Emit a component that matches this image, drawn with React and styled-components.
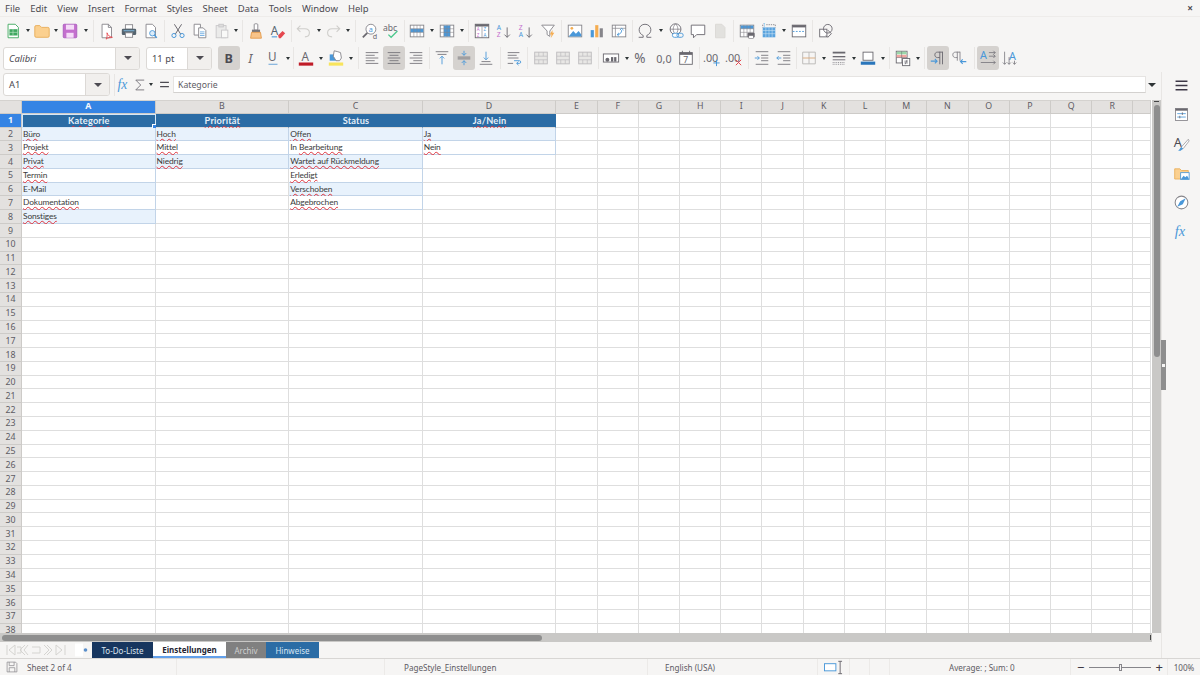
import React from "react";
import styled, { createGlobalStyle, css } from "styled-components";

const Global = createGlobalStyle`
  html, body { margin: 0; padding: 0; background: #f6f5f4; }
  body { font-family: "Noto Sans", sans-serif; color: #3d3846; overflow: hidden; }
`;

const G = "#6a686f";
const B = "#4a98d9";
const D = "#86858a";

const lines = (rows, color = G) =>
  rows.map(([x1, x2, y], i) => (
    <line key={i} x1={x1} x2={x2} y1={y} y2={y} stroke={color} strokeWidth=".9" />
  ));

const table = (fill, rect) => (
  <>
    <rect x="2.500" y="3.500" width="15" height="13" fill="#fff" stroke={D} />
    {rect && <rect {...rect} fill={fill} />}
    <path d="M2.500 7.500h15M2.500 11.500h15M6.500 3.500v13M10 3.500v13M13.500 3.500v13" stroke={D} strokeWidth=".6" fill="none" />
  </>
);

const merged = (
  <g opacity=".4">
    <rect x="3" y="3.500" width="14" height="13" fill="#d5d3d0" stroke={G} />
    <path d="M3 8h14M3 12h14M7.500 3.500V8M12.500 3.500V8M7.500 12v4.500M12.500 12v4.500" stroke={G} strokeWidth=".8" fill="none" />
  </g>
);

function Glyph({ children, $w, $i, $c, $s = 13, $x = 5, $y = 15, $serif }) {
  return (
    <text
      x={$x}
      y={$y}
      fontSize={$s}
      fontWeight={$w || 400}
      fontStyle={$i ? "italic" : "normal"}
      fontFamily={$serif ? "Liberation Serif, serif" : "Noto Sans, sans-serif"}
      fill={$c}
    >
      {children}
    </text>
  );
}

const icons = {
  new: (
    <>
      <path d="M4.500 2.500h8l3.500 3.500v11.500h-11.500z" fill="#fff" stroke="#3fa860" />
      <rect x="6" y="8" width="9" height="7" fill="#3fa860" />
      <path d="M6 11.500h9M10 8v7" stroke="#bfe6c9" strokeWidth=".7" />
    </>
  ),
  open: <path d="M2 5.500c0-1 .5-1.500 1.500-1.500h4l2 2h7c1 0 1.500.5 1.500 1.500v8c0 1-.5 1.500-1.500 1.500h-13c-1 0-1.500-.5-1.500-1.500z" fill="#fbd08f" stroke="#e8ad58" />,
  save: (
    <>
      <rect x="2.500" y="2.500" width="15" height="15" rx="1" fill="#c46fce" stroke="#a95cbd" />
      <rect x="5.500" y="3" width="9" height="5.500" fill="#f5dcf8" />
      <rect x="6" y="12" width="8" height="5.500" fill="#f5dcf8" />
    </>
  ),
  pdf: (
    <>
      <path d="M4.500 2.500h7l3.500 3.500v11.500h-10.500z" fill="#fff" stroke={D} />
      <path d="M11.500 2.500v3.500h3.500" fill="none" stroke={D} />
      <path d="M10 12c1 3 3 4.500 6 5-3 0-5 .5-7 2 1-2 1.500-4 1-7z" fill="none" stroke="#e5484f" />
    </>
  ),
  print: (
    <>
      <rect x="6" y="3" width="8" height="5" fill="#fff" stroke={D} />
      <rect x="2" y="7.500" width="16" height="7" rx="1.500" fill="#55646f" />
      <rect x="6" y="12" width="8" height="5" fill="#fff" stroke={D} />
      <rect x="4" y="9" width="12" height="1.300" fill="#77aacc" />
    </>
  ),
  preview: (
    <>
      <path d="M4.500 2.500h7l3.500 3.500v11.500h-10.500z" fill="#fff" stroke={D} />
      <circle cx="11.500" cy="12.500" r="3" fill="#dcecf9" stroke={B} />
      <path d="M13.500 14.500l3 3" stroke={B} strokeWidth="1.500" />
    </>
  ),
  cut: (
    <>
      <path d="M6 2.500l7 11M14 2.500l-7 11" stroke={G} strokeWidth="1.100" />
      <circle cx="5.500" cy="15" r="2.300" fill="none" stroke={B} strokeWidth="1.100" />
      <circle cx="14.500" cy="15" r="2.300" fill="none" stroke={B} strokeWidth="1.100" />
    </>
  ),
  copy: (
    <>
      <path d="M3.500 2.500h7v12h-7z" fill="#fff" stroke={D} />
      <path d="M8.500 6.500h5l3 3v8h-8z" fill="#fff" stroke={D} />
      <path d="M10 11h5M10 13h5M10 15h5" stroke={B} strokeWidth=".8" />
    </>
  ),
  paste: (
    <g opacity=".4">
      <rect x="3.500" y="4" width="11" height="13.500" fill="#ddd" stroke={D} />
      <rect x="6.500" y="2.500" width="5" height="3" fill="#bbb" stroke={D} />
      <rect x="9.500" y="9" width="7" height="8.500" fill="#fff" stroke={D} />
    </g>
  ),
  clone: (
    <>
      <rect x="8" y="2" width="4" height="7" rx="1" fill="#fff" stroke={D} />
      <rect x="5.500" y="8.500" width="9" height="3" fill="#77767b" />
      <path d="M5 11.500h10l1 6.500h-12z" fill="#f8c48a" stroke="#e39b4c" />
    </>
  ),
  clear: (
    <>
      <Glyph $c="#55646f" $s="13" $x="2" $y="14">A</Glyph>
      <path d="M3 16.500h6" stroke={B} strokeWidth="1.200" />
      <path d="M10 15l5-5 3 2.500-5 5.500h-2z" fill="#e5484f" />
    </>
  ),
  undo: <path d="M6 4l-3.500 3.500 3.500 3.500M3 7.500h8c3 0 5 2 5 4.500s-2 4.500-5 4.500" fill="none" stroke="#cfcecb" strokeWidth="1.200" />,
  redo: <path d="M14 4l3.500 3.500-3.500 3.500M17 7.500h-8c-3 0-5 2-5 4.500s2 4.500 5 4.500" fill="none" stroke="#cfcecb" strokeWidth="1.200" />,
  find: (
    <>
      <circle cx="11" cy="8" r="5.500" fill="#fff" stroke={D} />
      <path d="M7 12l-5 5" stroke={G} strokeWidth="2" />
      <Glyph $c={B} $s="8" $x="8.500" $y="11">a</Glyph>
      <Glyph $c={G} $s="8" $x="13" $y="19">d</Glyph>
    </>
  ),
  spell: (
    <>
      <Glyph $c={G} $s="9.500" $x="0" $y="10">abc</Glyph>
      <path d="M6 14l3 3 7-7" fill="none" stroke="#4ac88c" strokeWidth="1.400" />
    </>
  ),
  row: table(B, { x: 3, y: 7.500, width: 14, height: 4 }),
  col: table(B, { x: 6.500, y: 4, width: 7, height: 12 }),
  sort: (
    <>
      <rect x="2.500" y="2.500" width="15" height="15" fill="#fff" stroke={G} />
      <rect x="2.500" y="2.500" width="15" height="2.500" fill={G} />
      <path d="M10 5v12.500" stroke={G} strokeWidth=".6" />
      <Glyph $c="#c46fce" $s="5" $x="4.200" $y="10.500">A</Glyph>
      <Glyph $c={B} $s="5" $x="11.800" $y="10.500">Z</Glyph>
      <Glyph $c="#c46fce" $s="5" $x="4.200" $y="17">Z</Glyph>
      <Glyph $c={B} $s="5" $x="11.800" $y="17">A</Glyph>
    </>
  ),
  asc: (
    <>
      <Glyph $c={B} $s="7.500" $x="2" $y="9">A</Glyph>
      <Glyph $c="#c46fce" $s="7.500" $x="2" $y="17">Z</Glyph>
      <path d="M13.500 6v11M10.500 14l3 3 3-3" fill="none" stroke={G} />
    </>
  ),
  desc: (
    <>
      <Glyph $c="#c46fce" $s="7.500" $x="2" $y="9">Z</Glyph>
      <Glyph $c={B} $s="7.500" $x="2" $y="17">A</Glyph>
      <path d="M13.500 6v11M10.500 14l3 3 3-3" fill="none" stroke={G} />
    </>
  ),
  filter: (
    <>
      <path d="M3 3.500h14l-5 6.500v6l-3-2v-4z" fill="#fff" stroke={D} />
      <path d="M15 9l-3 5h2l-1 4 4-6h-2z" fill="#f5ad50" />
    </>
  ),
  image: (
    <>
      <rect x="2.500" y="3.500" width="15" height="13" fill="#fff" stroke={D} />
      <circle cx="6.500" cy="7" r="1.500" fill="#f5ad50" />
      <path d="M3 16l5-6 3 3 3-3 3 4v2z" fill={B} />
    </>
  ),
  chart: (
    <>
      <rect x="3" y="9" width="3.500" height="8" fill={B} />
      <rect x="8" y="3.500" width="3.500" height="13.500" fill="#f5ad50" />
      <rect x="13" y="7" width="3.500" height="10" fill={D} />
    </>
  ),
  pivot: (
    <>
      <rect x="2.500" y="3.500" width="15" height="13" fill="#fff" stroke={D} />
      <path d="M2.500 7h15M6 3.500v13" stroke={D} strokeWidth=".8" />
      <path d="M8 14c3 0 5-2 5-5M11 9l2-2 2 2M10 12l-2 2 2 2" fill="none" stroke={B} />
    </>
  ),
  omega: <path d="M3 17h5v-2c-3-1.500-4.500-3.500-4.500-6.500 0-3.500 3-6 6.500-6s6.500 2.500 6.500 6c0 3-1.500 5-4.500 6.500v2h5" fill="none" stroke={G} strokeWidth="1" />,
  link: (
    <>
      <circle cx="9.500" cy="8" r="6" fill="#fff" stroke={G} />
      <path d="M3.500 8h12M9.500 2c-3.500 3.500-3.500 8.500 0 12M9.500 2c3.500 3.500 3.500 8.500 0 12" fill="none" stroke={G} strokeWidth=".7" />
      <rect x="6" y="12.500" width="7" height="4.500" rx="2.200" fill="#fff" stroke={B} />
      <rect x="11" y="12.500" width="7" height="4.500" rx="2.200" fill="none" stroke={B} />
    </>
  ),
  comment: <path d="M2.500 3.500h15v10.500h-9l-3.500 3.500v-3.500h-2.500z" fill="#fff" stroke={G} />,
  page: <path d="M5 2.500h7l3.500 3.500v11.500h-10.500z" fill="#e2e1de" stroke="#dad8d5" />,
  printarea: (
    <>
      {table(B, { x: 3, y: 4, width: 14, height: 3.500 })}
      <rect x="10.500" y="12" width="8" height="5" rx="1" fill={G} />
      <rect x="12" y="15" width="5" height="3.500" fill="#fff" stroke={G} strokeWidth=".6" />
    </>
  ),
  freeze: (
    <>
      <rect x="3" y="6" width="14" height="11" fill="#5aa3de" />
      <path d="M3 9.500h14M3 13h14M6.500 6v11M10 6v11M13.500 6v11" stroke="#d3e6f6" strokeWidth=".6" />
      <path d="M7 3h10v3M3 3v3" fill="none" stroke={D} strokeDasharray="1.500 1" />
      <Glyph $c={B} $s="5" $x="3" $y="5">1</Glyph>
    </>
  ),
  split: (
    <>
      <rect x="2.500" y="3.500" width="15" height="13" fill="#fff" stroke={G} />
      <rect x="2.500" y="3.500" width="15" height="2.500" fill={G} />
      <path d="M3 10.500h14" stroke={B} strokeDasharray="2 1.500" />
    </>
  ),
  shapes: (
    <>
      <rect x="3" y="8" width="8" height="8.500" fill="#fff" stroke={G} />
      <circle cx="12" cy="7.500" r="4.800" fill="none" stroke={G} />
      <path d="M12 9l4 4-4 4-2-2" fill="none" stroke={G} />
    </>
  ),
  bold: <Glyph $w="700" $c="#4d4b52" $s="14">B</Glyph>,
  italic: <Glyph $i $c="#6a686f" $s="14" $x="7">I</Glyph>,
  underline: (
    <>
      <Glyph $c="#6a686f" $y="13" $s="13" $x="4.500">U</Glyph>
      <path d="M5 17h10" stroke="#7fb0dc" strokeWidth="1.300" />
    </>
  ),
  fontColor: (
    <>
      <Glyph $c="#6a686f" $y="13" $s="13" $x="5">A</Glyph>
      <rect x="2" y="15" width="16" height="3.500" fill="#c01c28" />
    </>
  ),
  bgColor: (
    <>
      <path d="M3 6h7v7h-7z" fill={B} />
      <path d="M8 2l4 1 3 1 1 6-2 3h-4l-3-5z" fill="#fff" stroke={D} />
      <rect x="2" y="15" width="16" height="3.500" fill="#f8e45c" />
    </>
  ),
  left: lines([[3, 17, 4], [3, 13, 7], [3, 17, 10], [3, 13, 13], [3, 17, 16]]),
  center: lines([[3, 17, 4], [5, 15, 7], [3, 17, 10], [5, 15, 13], [3, 17, 16]]),
  right: lines([[3, 17, 4], [7, 17, 7], [3, 17, 10], [7, 17, 13], [3, 17, 16]]),
  top: (
    <>
      {lines([[3, 17, 3], [5, 15, 6]])}
      <path d="M10 17V8M7.500 10.500l2.500-2.500 2.500 2.500" fill="none" stroke={B} />
    </>
  ),
  middle: (
    <>
      {lines([[3, 17, 9], [3, 17, 11]])}
      <path d="M10 2v5M7.500 4.500l2.500 2.500 2.500-2.500M10 18v-5M7.500 15.500l2.500-2.500 2.500 2.500" fill="none" stroke={B} />
    </>
  ),
  bottom: (
    <>
      {lines([[5, 15, 14], [3, 17, 17]])}
      <path d="M10 3v9M7.500 9.500l2.500 2.500 2.500-2.500" fill="none" stroke={B} />
    </>
  ),
  wrap: (
    <>
      {lines([[3, 16, 4], [3, 13, 7], [3, 15, 10], [3, 9, 16]])}
      <path d="M10 13h6c2 0 2 3 0 3h-3M15 14l-2 2 2 2" fill="none" stroke={B} />
    </>
  ),
  merge1: merged,
  merge2: merged,
  merge3: merged,
  currency: (
    <>
      <rect x="1.500" y="5.500" width="17" height="9" fill="#fff" stroke={G} />
      <circle cx="6" cy="12" r="2.200" fill={G} />
      <rect x="10" y="9" width="2.500" height="5" fill={G} />
      <rect x="13.500" y="9" width="2.500" height="5" fill={G} />
    </>
  ),
  percent: <Glyph $c="#6a686f" $s="15" $x="1.500" $y="15.500">%</Glyph>,
  number: <Glyph $c="#6a686f" $s="12" $x="1.500" $y="15">0,0</Glyph>,
  date: (
    <>
      <rect x="3" y="4" width="14" height="13" fill="#fff" stroke={G} />
      <rect x="3" y="4" width="14" height="2.500" fill={G} />
      <path d="M6 2v3M14 2v3" stroke={G} />
      <Glyph $c="#6a686f" $s="9.500" $x="7" $y="15.500">7</Glyph>
    </>
  ),
  addDec: (
    <>
      <Glyph $c="#6a686f" $s="12" $x="0" $y="14">.00</Glyph>
      <path d="M15 12v7M11.500 15.500h7" stroke={B} strokeWidth="1.100" />
    </>
  ),
  delDec: (
    <>
      <Glyph $c="#6a686f" $s="12" $x="0" $y="14">.00</Glyph>
      <path d="M12 12l6 6M18 12l-6 6" stroke="#e5484f" strokeWidth="1.100" />
    </>
  ),
  indent: (
    <>
      {lines([[3, 17, 3], [9, 17, 7], [9, 17, 10], [9, 17, 13], [3, 17, 17]])}
      <path d="M2 10h5M5 8l2 2-2 2" fill="none" stroke={B} />
    </>
  ),
  outdent: (
    <>
      {lines([[3, 17, 3], [9, 17, 7], [9, 17, 10], [9, 17, 13], [3, 17, 17]])}
      <path d="M7 10h-5M4 8l-2 2 2 2" fill="none" stroke={B} />
    </>
  ),
  borders: (
    <>
      <path d="M3 3.500h14v13h-14zM10 3.500v13" fill="none" stroke="#b9b7b4" />
      <path d="M3 10h14" stroke="#d8a878" />
    </>
  ),
  borderStyle: (
    <>
      <path d="M3 4h14" stroke={G} strokeWidth="2" />
      <path d="M3 8.500h14" stroke={G} strokeWidth="1.500" />
      <path d="M3 12h14" stroke={G} />
      <path d="M3 15h14M3 17h14" stroke={G} strokeDasharray="1 1" strokeWidth=".8" />
    </>
  ),
  borderColor: (
    <>
      <rect x="4.500" y="3.500" width="11" height="9" fill="#fff" stroke={G} />
      <rect x="2" y="14" width="16" height="3.500" fill="#2a76bb" />
    </>
  ),
  cond: (
    <>
      <rect x="2.500" y="2.500" width="12" height="13" fill="#fff" stroke={G} />
      <rect x="3" y="3" width="11" height="3" fill="#9bd6a9" />
      <rect x="3" y="6.500" width="11" height="3" fill="#f3a5a1" />
      <path d="M2.500 9.500h12M8.500 2.500v13" stroke={G} strokeWidth=".6" />
      <rect x="9.500" y="10.500" width="8" height="8" fill="#fff" stroke={G} />
      <path d="M11.500 13.500h4M11.500 15.500h4M14.500 12l-2 5" stroke={G} strokeWidth=".8" />
    </>
  ),
  ltr: (
    <>
      <path d="M15 3v14M12 3v14M15 3.500h-5.500c-2 0-3 1.300-3 3s1 3 3 3h2.500" fill="none" stroke={G} />
      <path d="M2 13.500h7M6.500 11l2.500 2.500-2.500 2.500" fill="none" stroke={B} strokeWidth="1.200" />
    </>
  ),
  rtl: (
    <>
      <path d="M7 3v10M10 3v10M10 3.500h-5c-2 0-3 1.300-3 3s1 3 3 3h2" fill="none" stroke={D} />
      <path d="M17 14h-6M13 11.500l-2.500 2.500 2.500 2.500" fill="none" stroke={B} strokeWidth="1.200" />
    </>
  ),
  horiz: (
    <>
      <Glyph $c={B} $s="12" $x="1" $y="11">A</Glyph>
      <path d="M11 4h7M16 2l2 2-2 2M11 8h7M16 6l2 2-2 2M2 15h16M16 13l2 2-2 2" fill="none" stroke={G} strokeWidth=".8" />
    </>
  ),
  vert: (
    <>
      <Glyph $c={B} $s="12" $x="9" $y="12">A</Glyph>
      <path d="M4 3v14M2 15l2 2 2-2M9 9v8M7 15l2 2 2-2M15 13v4M13 15l2 2 2-2" fill="none" stroke={G} strokeWidth=".8" />
    </>
  ),
  menu: <path d="M3 5h14M3 10h14M3 15h14" stroke="#3d3846" strokeWidth="1.700" />,
  props: (
    <>
      <rect x="3" y="3" width="14" height="14" fill="#fff" stroke={D} />
      <rect x="3" y="3" width="14" height="2.500" fill={G} />
      <path d="M5 9h10M5 13h10" stroke={B} />
      <path d="M11 7.500v3M8 11.500v3" stroke={G} />
    </>
  ),
  styles: (
    <>
      <Glyph $c="#4d4b52" $s="15" $x="1" $y="14">A</Glyph>
      <path d="M18 5l-8 9-1 3 3-1 7-9z" fill="#fff" stroke={D} strokeWidth=".8" />
      <path d="M9.500 14l2.500 2-3 2.500-3 0c1.500-1 2-2.500 3.500-4.500z" fill={B} />
    </>
  ),
  gallery: (
    <>
      <path d="M2 4.500h6l2 2h8v10h-16z" fill="#fbd08f" stroke="#e8ad58" />
      <rect x="9" y="9" width="10" height="8" fill="#fff" stroke={B} />
      <path d="M9.500 16.500l3-4 2 2 2-2 2 3v1z" fill={B} />
    </>
  ),
  navigator: (
    <>
      <circle cx="10" cy="10" r="7.500" fill="#fff" stroke={D} strokeWidth="1.200" />
      <path d="M15 5l-3.500 7L5 15l3.500-6.500z" fill={B} />
    </>
  ),
  fx: <Glyph $serif $i $c={B} $s="17" $x="2" $y="15">fx</Glyph>,
  saveDoc: <path d="M3 3h12l2 2v12h-14zM6 3v5h7V3M6 17v-6h8v6" fill="none" stroke={D} />,
  sel: (
    <>
      <rect x="0.500" y="6" width="12" height="7.500" fill="#fff" stroke={B} />
      <path d="M15 3.500h4M15 16.500h4M17 3.500v13" stroke={G} />
    </>
  ),
};

const Shell = styled.div`
  width: 1200px;
  height: 675px;
  display: flex;
  flex-direction: column;
  overflow: hidden;
  background: #f6f5f4;
`;

const MenuBar = styled.div`
  height: 16px;
  display: flex;
  align-items: center;
  padding-left: 5px;
  gap: 10px;
  font-size: 9.500px;
  color: #4d4b52;
  border-bottom: 1px solid #eeecea;
  position: relative;
`;

const Close = styled.span`
  position: absolute;
  right: 7px;
  top: 1px;
  font-size: 10px;
  font-weight: 700;
`;

const Toolbar = styled.div`
  height: ${(p) => p.$h}px;
  display: flex;
  align-items: center;
  padding-left: ${(p) => p.$pad}px;
`;

const Btn = styled.div`
  width: 22px;
  height: 24px;
  flex: none;
  display: flex;
  align-items: center;
  justify-content: center;
  border-radius: 3px;
  ${(p) =>
    p.$active &&
    css`
      background: #d5d2cf;
    `}
  svg {
    width: 18px;
    height: 18px;
    overflow: visible;
  }
`;

const Caret = styled.div`
  width: ${(p) => p.$w}px;
  flex: none;
  display: flex;
  justify-content: center;
  &::after {
    content: "";
    border: 2.500px solid transparent;
    border-top: 3px solid #2e3436;
    border-bottom: 0;
  }
`;

const Sep = styled.div`
  width: ${(p) => p.$w}px;
  height: 22px;
  flex: none;
  display: flex;
  justify-content: center;
  &::after {
    content: "";
    width: 1px;
    background: #e8e6e4;
  }
`;

const Combo = styled.div`
  width: ${(p) => p.$w}px;
  height: 23px;
  margin-right: ${(p) => p.$mr}px;
  flex: none;
  display: flex;
  background: #fff;
  border: 1px solid #dcd9d6;
  border-radius: 3px;
  box-sizing: border-box;
  overflow: hidden;
  font-size: 9.400px;
  color: #4d4b52;
`;

const ComboText = styled.div`
  flex: 1;
  display: flex;
  align-items: center;
  padding-left: 5px;
  font-style: ${(p) => (p.$italic ? "italic" : "normal")};
`;

const ComboBtn = styled.div`
  width: 23px;
  flex: none;
  display: flex;
  align-items: center;
  justify-content: center;
  background: #f1efed;
  border-left: 1px solid #dcd9d6;
  &::after {
    content: "";
    border: 4px solid transparent;
    border-top: 4.500px solid #4d4b52;
    border-bottom: 0;
  }
`;

const Body = styled.div`
  flex: 1;
  min-height: 0;
  display: flex;
`;

const Main = styled.div`
  width: 1161px;
  display: flex;
  flex-direction: column;
`;

const FormulaBar = styled.div`
  height: 28px;
  display: flex;
  align-items: center;
  padding: 0 0 3px 3px;
  box-sizing: border-box;
`;

const FormulaTool = styled.div`
  width: ${(p) => p.$w}px;
  flex: none;
  display: flex;
  justify-content: center;
  svg {
    width: ${(p) => p.$icon || 14}px;
    height: ${(p) => p.$icon || 14}px;
    overflow: visible;
  }
`;

const FormulaInput = styled.div`
  width: 973px;
  height: 17px;
  flex: none;
  display: flex;
  align-items: center;
  padding-left: 4px;
  box-sizing: border-box;
  background: #fff;
  border: 1px solid #e6e4e2;
  border-bottom-color: #d3d1cf;
  font-size: 8.700px;
  color: #5e5c64;
`;

const FormulaCaret = styled(Caret)`
  margin-left: 1px;
  &::after {
    border-width: 4px;
    border-top-width: 4.500px;
    border-bottom-width: 0;
  }
`;

const SheetArea = styled.div`
  flex: 1;
  min-height: 0;
  display: flex;
  position: relative;
`;

const GridClip = styled.div`
  width: 1152px;
  overflow: hidden;
  background: #fff;
`;

const Grid = styled.div`
  display: grid;
  grid-template-columns: 22px repeat(4, 133.600px) repeat(14, 41.230px) 18px;
  grid-auto-rows: 13.790px;
`;

const ColHead = styled.div`
  display: flex;
  align-items: center;
  justify-content: center;
  box-sizing: border-box;
  font-size: 8.800px;
  line-height: 1;
  background: ${(p) => (p.$on ? "#3584e4" : "#e3e1df")};
  color: ${(p) => (p.$on ? "#f4f8fd" : "#5e5c64")};
  font-weight: ${(p) => (p.$on ? 700 : 400)};
  border-right: 1px solid #cdcbc8;
  border-bottom: 1px solid #cdcbc8;
  border-top: 1px solid #d4d2cf;
`;

const RowHead = styled(ColHead)`
  border-top: 0;
  padding-top: 1px;
`;

const Cell = styled.div`
  position: relative;
  box-sizing: border-box;
  padding-left: 1px;
  font-family: "Lato", sans-serif;
  font-size: 8.400px;
  letter-spacing: -0.120px;
  line-height: 13px;
  white-space: nowrap;
  color: #3a3a3a;
  background: ${(p) => (p.$head ? "#2b6ca5" : p.$zebra ? "#e8f2fc" : "#fff")};
  border-right: 1px solid ${(p) => (p.$head ? "#2b6ca5" : p.$tone ? "#c2d4e8" : "#dedede")};
  border-bottom: 1px solid ${(p) => (p.$tone ? "#c2d4e8" : "#dedede")};
  ${(p) =>
    p.$head &&
    css`
      color: #e6eff8;
      font-size: 9.200px;
      font-weight: 700;
      text-align: center;
      letter-spacing: 0.200px;
    `}
`;

const Spell = styled.span`
  text-decoration: underline wavy #e0333c;
  text-decoration-thickness: 0.700px;
  text-underline-offset: 0.500px;
`;

const Selection = styled.div`
  position: absolute;
  inset: 0 -1px -1px -0.500px;
  border: 1.500px solid #d7e7f7;
  box-sizing: border-box;
  &::after {
    content: "";
    position: absolute;
    right: -3px;
    bottom: -3px;
    width: 4px;
    height: 4px;
    background: #3584e4;
    border: 0.500px solid #fff;
  }
`;

const VScroll = styled.div`
  width: 9px;
  background: #c9c8c6;
  position: relative;
  padding: 5px 1.500px 0;
  box-sizing: border-box;
`;

const VThumb = styled.div`
  height: 252px;
  background: #8e8e8e;
  border-radius: 3px;
`;

const VTick = styled.div`
  position: absolute;
  top: 1px;
  left: 2px;
  right: 2px;
  height: 1px;
  background: #444;
`;

const HScroll = styled.div`
  height: 9px;
  background: #c9c8c6;
  display: flex;
  align-items: center;
  padding: 0 2px;
  width: 1152px;
  box-sizing: border-box;
  position: relative;
`;

const HThumb = styled.div`
  width: 540px;
  height: 6px;
  border-radius: 3px;
  background: #8e8e8e;
`;

const HTick = styled.div`
  position: absolute;
  right: 1px;
  top: 2px;
  height: 5px;
  width: 1px;
  background: #444;
`;

const TabBar = styled.div`
  height: 16px;
  display: flex;
  align-items: stretch;
`;

const TabNav = styled.div`
  width: 75px;
  flex: none;
  padding-left: 6px;
  box-sizing: border-box;
  display: flex;
  align-items: center;
  svg {
    width: 60px;
    height: 12px;
  }
`;

const NewSheet = styled.div`
  width: 17px;
  flex: none;
  display: flex;
  align-items: center;
  svg {
    width: 14px;
    height: 14px;
  }
`;

const Tab = styled.div`
  width: ${(p) => p.$w}px;
  flex: none;
  box-sizing: border-box;
  display: flex;
  align-items: center;
  justify-content: center;
  font-size: 8px;
  background: ${(p) => p.$bg};
  color: ${(p) => p.$fg};
  font-weight: ${(p) => (p.$current ? 700 : 400)};
  ${(p) =>
    p.$current &&
    css`
      border-bottom: 2px solid #62a0ea;
    `}
`;

const Sidebar = styled.div`
  flex: 1;
  position: relative;
  border-left: 1px solid #e8e6e4;
  display: flex;
  flex-direction: column;
  align-items: center;
  padding: 5px 0 0 1px;
  gap: 12.200px;
  svg {
    width: 17px;
    height: 17px;
    overflow: visible;
  }
`;

const SideHandle = styled.div`
  position: absolute;
  left: -1px;
  top: 268px;
  width: 5px;
  height: 50px;
  background: #8e8e8e;
  display: flex;
  align-items: center;
  justify-content: center;
  &::after {
    content: "";
    width: 3px;
    height: 3px;
    background: #f6f5f4;
  }
`;

const Status = styled.div`
  height: 17px;
  display: flex;
  align-items: center;
  border-top: 1px solid #d8d6d4;
  font-size: 8.100px;
  color: #5e5c64;
  box-sizing: border-box;
`;

const StatusCell = styled.div`
  width: ${(p) => p.$w}px;
  height: 100%;
  flex: none;
  box-sizing: border-box;
  display: flex;
  align-items: center;
  gap: ${(p) => p.$gap || 0}px;
  justify-content: ${(p) => (p.$left ? "flex-start" : "center")};
  padding-left: ${(p) => p.$pl || 0}px;
  border-right: ${(p) => (p.$plain ? "0" : "1px solid #eceae8")};
  svg {
    width: ${(p) => p.$icon || 14}px;
    height: ${(p) => p.$icon || 14}px;
    flex: none;
  }
`;

const ZoomTrack = styled.div`
  width: 64px;
  height: 1px;
  background: #86858a;
  position: relative;
  &::after {
    content: "";
    position: absolute;
    left: 30px;
    top: -3px;
    width: 1px;
    height: 5px;
    border: 1px solid #86858a;
    background: #f6f5f4;
  }
`;

const ZoomSign = styled.span`
  font-size: 13px;
  line-height: 1;
  color: #3d3846;
  width: 16px;
  text-align: center;
`;

const Icon = ({ name }) => <svg viewBox="0 0 20 20">{icons[name]}</svg>;

const ToolItems = ({ items, active = [] }) =>
  items.map((it, i) => {
    if (typeof it === "number") {
      return it > 0 ? <Caret key={i} $w={it} /> : <Sep key={i} $w={-it} />;
    }
    return (
      <Btn key={i} $active={active.includes(it)}>
        <Icon name={it} />
      </Btn>
    );
  });

// positive number = dropdown caret width, negative = separator width
const topTools = [
  "new", 7, "open", 6, "save", 9, -6, "pdf", "print", "preview", -5, "cut", "copy", "paste", 6, -6,
  "clone", "clear", -4, "undo", 7, "redo", 8, -7, "find", "spell", -3, "row", 8, "col", 8, -5,
  "sort", "asc", "desc", "filter", -5, "image", "chart", "pivot", -4, "omega", 9, "link", "comment", "page", -5,
  "printarea", "freeze", 8, "split", -5, "shapes",
];

const formatTools = [
  "bold", "italic", "underline", 7, -4, "fontColor", 8, "bgColor", 8, -6,
  "left", "center", "right", -4, "top", "middle", "bottom", -6, "wrap", -5,
  "merge1", "merge2", "merge3", -4, "currency", 9, "percent", "number", "date", -4,
  "addDec", "delDec", -6, "indent", "outdent", -3, "borders", 8, "borderStyle", 7, "borderColor", 8, -5,
  "cond", 8, -5, "ltr", "rtl", -6, "horiz", "vert",
];

const menus = ["File", "Edit", "View", "Insert", "Format", "Styles", "Sheet", "Data", "Tools", "Window", "Help"];
const columns = "ABCDEFGHIJKLMNOPQRS".split("");

const S = ({ children }) => <Spell>{children}</Spell>;

const sheet = {
  1: [<S>Kategorie</S>, <S>Priorität</S>, "Status", <S>Ja/Nein</S>],
  2: [<S>Büro</S>, <S>Hoch</S>, <S>Offen</S>, <S>Ja</S>],
  3: [<S>Projekt</S>, <S>Mittel</S>, <>In <S>Bearbeitung</S></>, <S>Nein</S>],
  4: [<S>Privat</S>, <S>Niedrig</S>, <S>Wartet auf Rückmeldung</S>],
  5: [<S>Termin</S>, null, <S>Erledigt</S>],
  6: ["E-Mail", null, <S>Verschoben</S>],
  7: [<S>Dokumentation</S>, null, <S>Abgebrochen</S>],
  8: [<S>Sonstiges</S>],
};

// how many rows of the formatted table each column runs down
const columnEnd = [8, 4, 7, 3];

const cellProps = (row, col) => {
  if (col > 3) return {};
  if (row === 1) return { $head: true };
  const inTable = row <= columnEnd[col];
  return { $tone: inTable, $zebra: inTable && row % 2 === 0 };
};

const tabs = [
  { label: "To-Do-Liste", w: 61, bg: "#17365f", fg: "#dfe6ef" },
  { label: "Einstellungen", w: 73, bg: "#fff", fg: "#241f31", current: true },
  { label: "Archiv", w: 40, bg: "#808080", fg: "#d0d0d0" },
  { label: "Hinweise", w: 53, bg: "#2b6ca5", fg: "#d8e6f3" },
];

export default function App() {
  const rows = Array.from({ length: 38 }, (_, i) => i + 1);
  return (
    <Shell>
      <Global />
      <MenuBar>
        {menus.map((m) => (
          <span key={m}>{m}</span>
        ))}
        <Close>×</Close>
      </MenuBar>
      <Toolbar $h={27} $pad={2}>
        <ToolItems items={topTools} />
      </Toolbar>
      <Toolbar $h={28} $pad={3}>
        <Combo $w={137} $mr={6}>
          <ComboText $italic>Calibri</ComboText>
          <ComboBtn />
        </Combo>
        <Combo $w={66} $mr={6}>
          <ComboText>11 pt</ComboText>
          <ComboBtn />
        </Combo>
        <ToolItems items={formatTools} active={["bold", "center", "middle", "ltr", "horiz"]} />
      </Toolbar>
      <Body>
        <Main>
          <FormulaBar>
            <Combo $w={107} $mr={3}>
              <ComboText>A1</ComboText>
              <ComboBtn />
            </Combo>
            <Sep $w={3} />
            <FormulaTool $w={16} $icon={16}>
              <Icon name="fx" />
            </FormulaTool>
            <FormulaTool $w={15}>
              <svg viewBox="0 0 20 20">
                <path d="M16 3H4l7 7-7 7h12" fill="none" stroke="#6a686f" strokeWidth="1.200" />
              </svg>
            </FormulaTool>
            <Caret $w={8} />
            <FormulaTool $w={18} $icon={11}>
              <svg viewBox="0 0 20 20">
                <path d="M2 6h16M2 14h16" stroke="#4d4b52" strokeWidth="2.200" />
              </svg>
            </FormulaTool>
            <FormulaInput>Kategorie</FormulaInput>
            <FormulaCaret $w={10} />
          </FormulaBar>
          <SheetArea>
            <GridClip>
              <Grid>
                <ColHead />
                {columns.map((c, i) => (
                  <ColHead key={c} $on={i === 0}>
                    {i < 18 ? c : ""}
                  </ColHead>
                ))}
                {rows.map((r) => (
                  <React.Fragment key={r}>
                    <RowHead $on={r === 1}>{r}</RowHead>
                    {columns.map((c, i) => (
                      <Cell key={c} {...cellProps(r, i)}>
                        {sheet[r] && sheet[r][i]}
                        {r === 1 && i === 0 && <Selection />}
                      </Cell>
                    ))}
                  </React.Fragment>
                ))}
              </Grid>
            </GridClip>
            <VScroll>
              <VTick />
              <VThumb />
            </VScroll>
          </SheetArea>
          <HScroll>
            <HThumb />
            <HTick />
          </HScroll>
          <TabBar>
            <TabNav>
              <svg viewBox="0 0 60 12" fill="none" stroke="#d5d4d1">
                <path d="M1 1v10M9 1L3 6l6 5zM11 3h4v6h-4M19 1l-5 5 5 5M22 1l-4 5 4 5M26 3h8v6h-8M38 1l5 5-5 5M41 1l5 5-5 5M50 1l6 5-6 5zM59 1v10" />
              </svg>
            </TabNav>
            <NewSheet>
              <svg viewBox="0 0 14 14">
                <path d="M0 .500h8v13h-8z" fill="#fff" />
                <circle cx="10.500" cy="7" r="1.800" fill="#5a8fcb" />
              </svg>
            </NewSheet>
            {tabs.map((t) => (
              <Tab key={t.label} $w={t.w} $bg={t.bg} $fg={t.fg} $current={t.current}>
                {t.label}
              </Tab>
            ))}
          </TabBar>
        </Main>
        <Sidebar>
          <Icon name="menu" />
          <Icon name="props" />
          <Icon name="styles" />
          <Icon name="gallery" />
          <Icon name="navigator" />
          <Icon name="fx" />
          <SideHandle />
        </Sidebar>
      </Body>
      <Status>
        <StatusCell $w={177} $left $pl={5} $gap={8}>
          <Icon name="saveDoc" />
          <span>Sheet 2 of 4</span>
        </StatusCell>
        <StatusCell $w={208} />
        <StatusCell $w={263} $left $pl={19}>PageStyle_Einstellungen</StatusCell>
        <StatusCell $w={170} $left $pl={17}>English (USA)</StatusCell>
        <StatusCell $w={32} $icon={19}>
          <Icon name="sel" />
        </StatusCell>
        <StatusCell $w={20} />
        <StatusCell $w={20} />
        <StatusCell $w={181} $left $pl={59}>Average: ; Sum: 0</StatusCell>
        <StatusCell $w={97} $left $pl={2}>
          <ZoomSign>−</ZoomSign>
          <ZoomTrack />
          <ZoomSign>+</ZoomSign>
        </StatusCell>
        <StatusCell $w={32} $plain>100%</StatusCell>
      </Status>
    </Shell>
  );
}
